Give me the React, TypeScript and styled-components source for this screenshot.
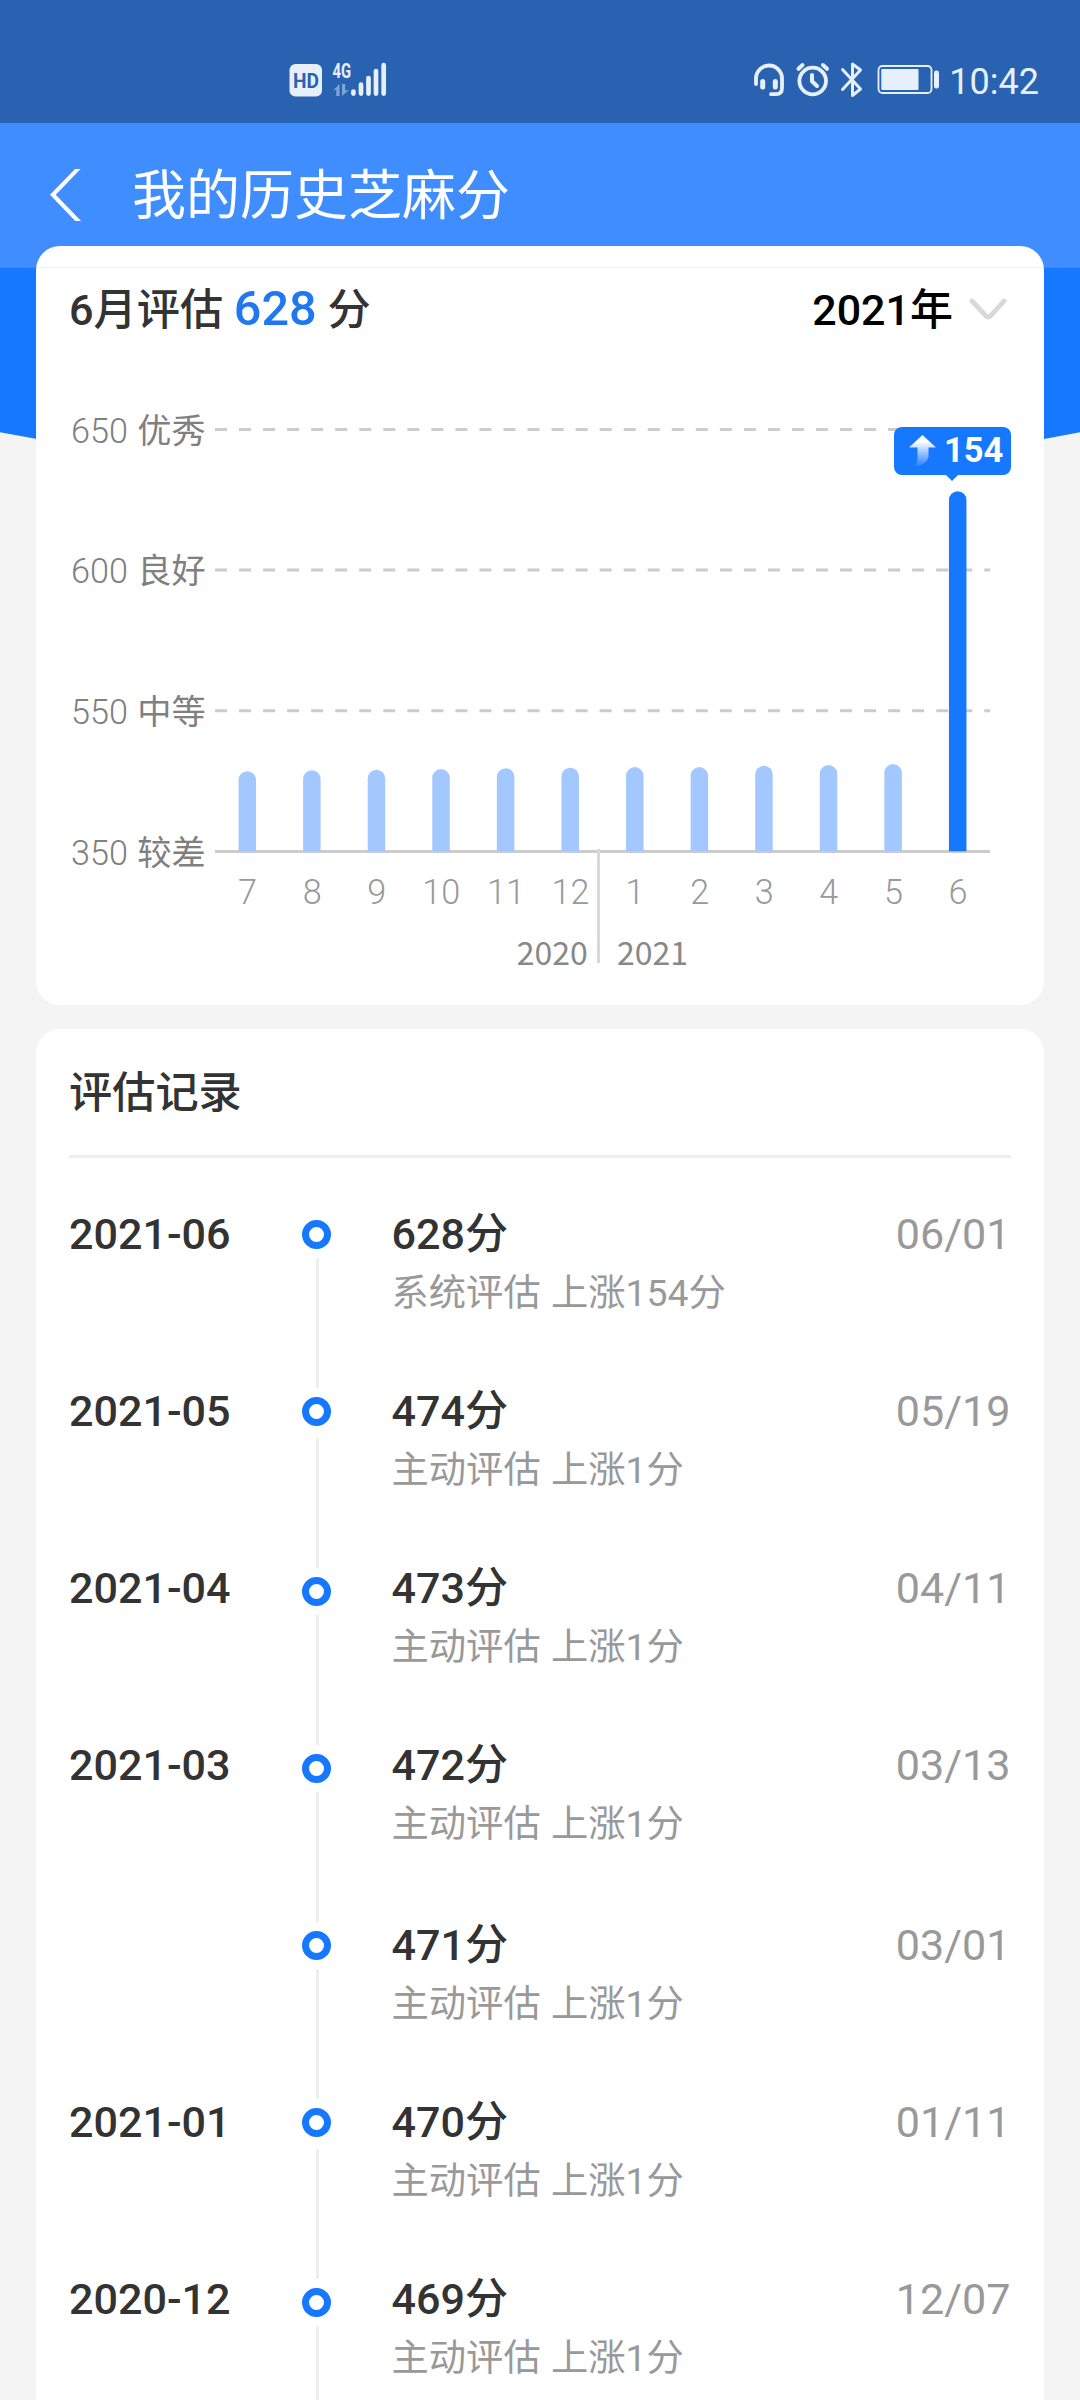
import React from "react";
import styled, { createGlobalStyle } from "styled-components";

const sans = `Roboto, "Noto Sans CJK SC", sans-serif`;

const GlobalStyle = createGlobalStyle`
  * { box-sizing: border-box; }
  body { margin: 0; background: #f4f4f4; font-family: ${sans}; }
`;

const Screen = styled.div`
  position: relative;
  width: 1080px;
  height: 2400px;
  overflow: hidden;
  background: #f4f4f4;
`;

const Hero = styled.svg`
  position: absolute;
  left: 0;
  top: 267px;
  display: block;
`;

const StatusBar = styled.div`
  display: flex;
  align-items: flex-start;
  justify-content: space-between;
  height: 123px;
  padding: 60px 41px 0 286px;
  background: #2962b0;
  color: #e6f0fc;
`;

const StatusGroup = styled.div`
  display: flex;
  height: 40px;
`;

const Clock = styled.span`
  margin-left: 5px;
  font-size: 36px;
  line-height: 44px;
`;

const NavBar = styled.header`
  display: flex;
  align-items: center;
  height: 144px;
  padding-left: 48px;
  background: #3f8dff;
`;

const Title = styled.h1`
  margin: 0 0 0 49px;
  padding-top: 4px;
  font-size: 54px;
  font-weight: 400;
  line-height: 64px;
  color: #fff;
`;

const NavEdge = styled.div`
  position: absolute;
  left: 0;
  top: 267px;
  width: 1080px;
  height: 1px;
  background: rgba(190, 200, 208, 0.24);
`;

const Content = styled.main`
  position: relative;
  display: flex;
  flex-direction: column;
  gap: 24px;
  margin-top: -21px;
  padding: 0 36px;
`;

const Card = styled.section<{ $height: number }>`
  height: ${(p) => p.$height}px;
  padding: 33px 33px 0;
  border-radius: 24px;
  background: #fff;
`;

const CardHead = styled.div`
  display: flex;
  justify-content: space-between;
  align-items: center;
  height: 60px;
  padding-right: 3px;
`;

const Heading = styled.h2`
  margin: 0;
  padding-top: 4px;
  font-size: 43.2px;
  font-weight: 500;
  line-height: 60px;
  color: #333;
  white-space: pre;
`;

const Score = styled.span`
  font-size: 48.6px;
  line-height: 1;
  color: #1f78f0;
`;

const YearPicker = styled.div`
  display: flex;
  align-items: center;
  gap: 15px;
  padding-top: 2px;
  font-size: 43px;
  font-weight: 500;
  line-height: 60px;
  color: #000;
`;

const Chart = styled.div`
  display: grid;
  grid-template-columns: 146.3px 775px;
  margin-top: 20.2px;
`;

const Levels = styled.div`
  display: grid;
  grid-template-rows: repeat(4, 140.7px);
  align-items: center;
  margin-top: -2px;
`;

const Level = styled.div`
  padding-left: 2px;
  font-size: 34.2px;
  font-weight: 300;
  word-spacing: 1px;
  color: #808080;
  white-space: nowrap;
`;

const LevelName = styled.span`
  font-weight: 400;
`;

const PlotArea = styled.div`
  position: relative;
`;

const PlotSvg = styled.svg`
  display: block;
`;

const Months = styled.div`
  display: grid;
  grid-template-columns: repeat(12, 1fr);
  margin-top: 14.2px;
  font-size: 34.2px;
  font-weight: 300;
  line-height: 48px;
  text-align: center;
  color: #999;
`;

const Years = styled.div`
  display: grid;
  grid-template-columns: 372.6px 1fr;
  gap: 29px;
  margin-top: 10.4px;
  font-family: "Noto Sans CJK SC", sans-serif;
  font-size: 32px;
  line-height: 48px;
  color: #888;
`;

const YearBefore = styled.span`
  text-align: right;
`;

const YearRule = styled.div`
  position: absolute;
  left: 382px;
  top: 489.8px;
  width: 3px;
  height: 114px;
  background: #d8d8d8;
`;

const Tip = styled.div`
  position: absolute;
  left: 678.7px;
  top: 67.8px;
  display: flex;
  align-items: center;
  width: 117px;
  height: 48px;
  padding-left: 14px;
  border-radius: 8px;
  background: #1677ff;
  color: #fff;
  font-size: 34.5px;
  font-weight: 700;

  &::after {
    content: "";
    position: absolute;
    left: 51px;
    top: 47px;
    border: 7.5px solid transparent;
    border-top-color: #1677ff;
    border-bottom: 0;
  }
`;

const TipValue = styled.span`
  margin-left: 7px;
  line-height: 46px;
  height: 48px;
`;

const Rule = styled.div`
  height: 3px;
  margin-top: 33px;
  background: #eee;
`;

const Records = styled.ul`
  margin: 52px 0 0;
  padding: 0;
  list-style: none;
`;

const Row = styled.li<{ $height: number }>`
  display: grid;
  grid-template-columns: 232px 90.5px 1fr auto;
  height: ${(p) => p.$height}px;
  font-size: 43.1px;
  line-height: 49px;
`;

const Month = styled.span`
  font-weight: 500;
  color: #333;
`;

const Rail = styled.div<{ $top: number; $gap: number }>`
  display: flex;
  flex-direction: column;
  align-items: center;
  width: 31px;
  padding-top: ${(p) => p.$top}px;

  &::after {
    content: "";
    flex: none;
    width: 3px;
    height: 130px;
    margin: ${(p) => p.$gap}px 0 0 1px;
    background: #eee;
  }
`;

const Dot = styled.span`
  flex: none;
  width: 29px;
  height: 29px;
  border: 7px solid #1677ff;
  border-radius: 50%;
`;

const Result = styled.span`
  font-weight: 500;
  color: #333;
`;

const Note = styled.span`
  display: block;
  margin-top: 11px;
  font-size: 37.3px;
  font-weight: 400;
  line-height: 46px;
  word-spacing: 1px;
  color: #999;
`;

const Day = styled.span`
  padding-right: 0.5px;
  color: #999;
`;

const HdIcon = () => (
  <svg width="38" height="40" viewBox="286 60 38 40">
    <rect x="289.5" y="64" width="32.5" height="32.5" rx="6" fill="#e6f0fc" />
    <text x="305.9" y="88" textAnchor="middle" textLength="26" lengthAdjust="spacingAndGlyphs" fontFamily="Roboto" fontWeight="700" fontSize="21" fill="#2962b0">HD</text>
  </svg>
);

const SignalIcon = () => (
  <svg width="60" height="40" viewBox="324 60 60 40" overflow="visible">
    <text x="332.6" y="77.8" textLength="18.6" lengthAdjust="spacingAndGlyphs" fontFamily="Roboto" fontWeight="700" fontSize="20" fill="currentColor">4G</text>
    <path d="M333 90.500l6.500-6.500v12h-3.200v-6.500zM342 84h3.200v6.500l3.800-.5-7 6z" fill="#7ea3d8" />
    <g stroke="currentColor" strokeWidth="4.700" strokeLinecap="round">
      <path d="M353.400 91.500v2.100M361 84.700v8.900M368.500 78v15.600M376 71v22.600M383.700 65.200v28.400" />
    </g>
  </svg>
);

const DeviceIcons = () => (
  <svg width="194" height="40" viewBox="750 60 194 40" fill="none" stroke="currentColor" strokeLinecap="round" strokeLinejoin="round">
    <g strokeWidth="3.800">
      <path d="M756 84V78.500a13 13 0 0 1 26 0V88c0 4-2 6.200-6 6.200h-5" />
    </g>
    <path strokeWidth="5" d="M762.700 81.500v5.500M775.300 81.500v5.500" />
    <circle cx="812.700" cy="81" r="13.300" strokeWidth="3.800" />
    <path strokeWidth="4" d="M812 75v6.200l5 4.800M798.500 68.800l4-3.800M827 68.800l-4-3.800" />
    <path strokeWidth="3" d="M842.500 69.500l18 19.500-8 6.500V64l8 6-18 19.500" />
    <rect x="878.500" y="66" width="53" height="27" rx="4" strokeWidth="1.800" />
    <rect x="881.300" y="69" width="37.200" height="21" rx="1" fill="currentColor" stroke="none" />
    <rect x="934" y="70.500" width="5" height="18" rx="2.200" fill="currentColor" stroke="none" />
  </svg>
);

const BackIcon = () => (
  <svg width="35" height="52" viewBox="0 0 35 52">
    <path d="M27 0h5.500L7.800 25.800 33 52h-5.800L2 25.800z" fill="#fff" />
  </svg>
);

const DownIcon = () => (
  <svg width="40" height="24" viewBox="0 0 40 24">
    <path d="M4 3l14 15q2.200 2 4.400 0l13.600-15" fill="none" stroke="#d8d8d8" strokeWidth="4.800" strokeLinecap="round" />
  </svg>
);

const RiseIcon = () => (
  <svg width="29" height="34" viewBox="0 0 29 34">
    <defs>
      <linearGradient id="rise" x1="0" y1="0" x2="0" y2="1">
        <stop offset=".2" stopColor="#fff" />
        <stop offset="1" stopColor="#fff" stopOpacity="0" />
      </linearGradient>
    </defs>
    <path d="M14.500 1L28 13.500h-7.500V23q-1 7-14.500 11 3.500-3 3.500-10V13.500H1z" fill="url(#rise)" />
  </svg>
);

const levels = [
  [650, "优秀"],
  [600, "良好"],
  [550, "中等"],
  [350, "较差"],
] as const;

const bars = [
  { month: 7, size: 80 },
  { month: 8, size: 81 },
  { month: 9, size: 81.5 },
  { month: 10, size: 82.2 },
  { month: 11, size: 83 },
  { month: 12, size: 83.5 },
  { month: 1, size: 84.2 },
  { month: 2, size: 84.2 },
  { month: 3, size: 85.5 },
  { month: 4, size: 86.2 },
  { month: 5, size: 87.2 },
  { month: 6, size: 360 },
];

const records = [
  { month: "2021-06", score: 628, kind: "系统评估", rise: 154, day: "06/01", height: 177, top: 10.2, gap: 8.8 },
  { month: "2021-05", score: 474, kind: "主动评估", rise: 1, day: "05/19", height: 177, top: 10.2, gap: 11.8 },
  { month: "2021-04", score: 473, kind: "主动评估", rise: 1, day: "04/11", height: 177, top: 13.2, gap: 8.8 },
  { month: "2021-03", score: 472, kind: "主动评估", rise: 1, day: "03/13", height: 180, top: 13.2, gap: 8.8 },
  { month: "", score: 471, kind: "主动评估", rise: 1, day: "03/01", height: 177, top: 10.2, gap: 8.8 },
  { month: "2021-01", score: 470, kind: "主动评估", rise: 1, day: "01/11", height: 177, top: 10.2, gap: 11.8 },
  { month: "2020-12", score: 469, kind: "主动评估", rise: 1, day: "12/07", height: 177, top: 13.2, gap: 8.8 },
];

const column = 775 / 12;
const base = 492.3;

const Plot = () => (
  <PlotSvg width="775" height="495" viewBox="0 0 775 495">
    {levels.map(([value], i) => (
      <line
        key={value}
        x1="0"
        x2="775"
        y1={70.4 + i * 140.7}
        y2={70.4 + i * 140.7}
        stroke="#ccc"
        strokeWidth="3"
        strokeDasharray={i < 3 ? "12.02 12.02" : undefined}
      />
    ))}
    {bars.map(({ month, size }, i) => {
      const x = column * (i + 0.5) - 8.75;
      return (
        <path
          key={month}
          d={`M${x} ${base}v${8.75 - size}a8.75 8.75 0 0 1 17.5 0V${base}z`}
          fill={month === 6 ? "#1677ff" : "#a2c8ff"}
        />
      );
    })}
  </PlotSvg>
);

export default function App() {
  return (
    <Screen>
      <GlobalStyle />
      <Hero width="1080" height="220" viewBox="0 0 1080 220">
        <path d="M0 0H1080V165.300Q540 270 0 165.300z" fill="#1677ff" />
      </Hero>
      <StatusBar>
        <StatusGroup>
          <HdIcon />
          <SignalIcon />
        </StatusGroup>
        <StatusGroup>
          <DeviceIcons />
          <Clock>10:42</Clock>
        </StatusGroup>
      </StatusBar>
      <NavBar>
        <BackIcon />
        <Title>我的历史芝麻分</Title>
      </NavBar>
      <Content>
        <Card $height={759}>
          <CardHead>
            <Heading>
              6月评估 <Score>628</Score> 分
            </Heading>
            <YearPicker>
              2021年
              <DownIcon />
            </YearPicker>
          </CardHead>
          <Chart>
            <Levels>
              {levels.map(([value, name]) => (
                <Level key={value}>
                  {value} <LevelName>{name}</LevelName>
                </Level>
              ))}
            </Levels>
            <PlotArea>
              <Plot />
              <Months>
                {bars.map(({ month }) => (
                  <span key={month}>{month}</span>
                ))}
              </Months>
              <Years>
                <YearBefore>2020</YearBefore>
                <span>2021</span>
              </Years>
              <YearRule />
              <Tip>
                <RiseIcon />
                <TipValue>154</TipValue>
              </Tip>
            </PlotArea>
          </Chart>
        </Card>
        <Card $height={1500}>
          <CardHead>
            <Heading>评估记录</Heading>
          </CardHead>
          <Rule />
          <Records>
            {records.map((r) => (
              <Row key={r.day} $height={r.height}>
                <Month>{r.month}</Month>
                <Rail $top={r.top} $gap={r.gap}>
                  <Dot />
                </Rail>
                <Result>
                  {r.score}分
                  <Note>
                    {r.kind} 上涨{r.rise}分
                  </Note>
                </Result>
                <Day>{r.day}</Day>
              </Row>
            ))}
          </Records>
        </Card>
      </Content>
      <NavEdge />
    </Screen>
  );
}
